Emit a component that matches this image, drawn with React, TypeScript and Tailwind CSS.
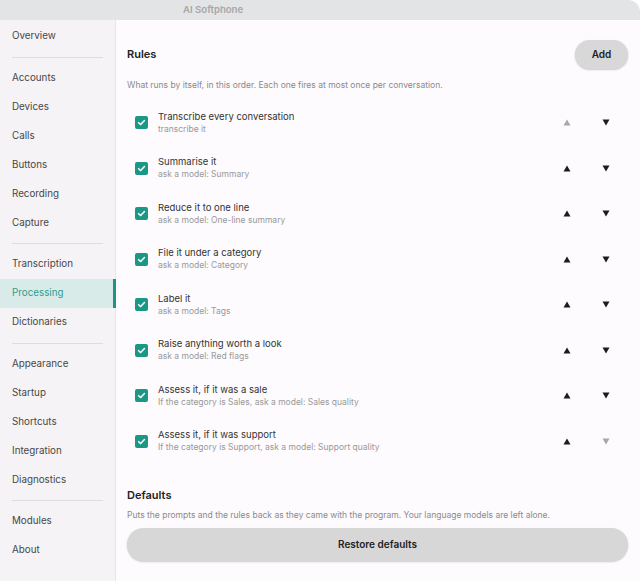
import React from 'react'

const navGroups: string[][] = [
  ['Overview'],
  ['Accounts', 'Devices', 'Calls', 'Buttons', 'Recording', 'Capture'],
  ['Transcription', 'Processing', 'Dictionaries'],
  ['Appearance', 'Startup', 'Shortcuts', 'Integration', 'Diagnostics'],
  ['Modules', 'About'],
]

const rules = [
  { title: 'Transcribe every conversation', sub: 'transcribe it' },
  { title: 'Summarise it', sub: 'ask a model: Summary' },
  { title: 'Reduce it to one line', sub: 'ask a model: One-line summary' },
  { title: 'File it under a category', sub: 'ask a model: Category' },
  { title: 'Label it', sub: 'ask a model: Tags' },
  { title: 'Raise anything worth a look', sub: 'ask a model: Red flags' },
  { title: 'Assess it, if it was a sale', sub: 'If the category is Sales, ask a model: Sales quality' },
  { title: 'Assess it, if it was support', sub: 'If the category is Support, ask a model: Support quality' },
]

const Arrow = ({ up, disabled }: { up?: boolean; disabled?: boolean }) => (
  <button className="w-[24px] h-[24px] flex items-center justify-center">
    <svg width="8" height="7" viewBox="0 0 8 7">
      <path
        d={up ? 'M4 0.5 L7.5 6.5 L0.5 6.5 Z' : 'M0.5 0.5 L7.5 0.5 L4 6.5 Z'}
        fill={disabled ? '#a8a8a8' : '#1c1c1c'}
      />
    </svg>
  </button>
)

const Check = () => (
  <div className="w-[13px] h-[13px] rounded-[2px] bg-[#1b9885] flex items-center justify-center shrink-0">
    <svg width="9" height="9" viewBox="0 0 10 10">
      <path d="M1.8 5.2 L4 7.3 L8.3 2.8" stroke="white" strokeWidth="1.7" fill="none" strokeLinecap="round" strokeLinejoin="round" />
    </svg>
  </div>
)

export default function App() {
  return (
    <div className="w-[640px] h-[581px] bg-white flex flex-col overflow-hidden" style={{ fontFamily: 'Inter, "Noto Sans", sans-serif' }}>
      {/* title bar */}
      <div className="h-[20px] bg-[#e3e4e5] rounded-tr-[12px] flex items-center pl-[183px] shrink-0">
        <span className="text-[9.6px] font-semibold text-[#a6a7a8]">AI Softphone</span>
      </div>

      <div className="flex flex-1 min-h-0">
        {/* sidebar */}
        <nav className="w-[116px] shrink-0 bg-[#f5f3f5] border-r border-[#e7e5e7] pt-[2px]">
          {navGroups.map((group, gi) => (
            <div key={gi}>
              {gi > 0 && (
                <div className="h-[12.5px] flex items-center px-[12px]">
                  <div className="w-full h-px bg-[#dedcde]" />
                </div>
              )}
              {group.map((item) => {
                const active = item === 'Processing'
                return (
                  <div
                    key={item}
                    className={
                      active
                        ? 'h-[29px] flex items-center pl-[12px] text-[9.8px] text-[#2f9d8e] bg-[#d9ebe9] border-r-[3px] border-[#1f9484] -mr-px'
                        : 'h-[29px] flex items-center pl-[12px] text-[9.8px] text-[#474747]'
                    }
                  >
                    {item}
                  </div>
                )
              })}
            </div>
          ))}
        </nav>

        {/* main */}
        <main className="flex-1 bg-[#fdfbfd] pl-[11px] pr-[12px] pt-[20px]">
          <div className="flex items-center justify-between h-[29px]">
            <h2 className="text-[11px] font-semibold text-[#222]">Rules</h2>
            <button className="w-[53px] h-[29px] rounded-full bg-[#d8d8d8] shadow-[0_1px_2px_rgba(0,0,0,0.2)] text-[10px] font-semibold text-[#222]">
              Add
            </button>
          </div>
          <p className="mt-[10px] text-[8.5px] text-[#8a8a8a] leading-[12px]">
            What runs by itself, in this order. Each one fires at most once per conversation.
          </p>

          <div className="mt-[9px]">
            {rules.map((r, i) => (
              <div key={r.title} className="h-[45.5px] flex items-center pl-[8px]">
                <Check />
                <div className="ml-[10px] flex-1 -mt-[1px]">
                  <div className="text-[9.5px] text-[#333] leading-[13px]">{r.title}</div>
                  <div className="text-[8.5px] text-[#999] leading-[12px]">{r.sub}</div>
                </div>
                <div className="flex items-center gap-[15px] mr-[10px]">
                  <Arrow up disabled={i === 0} />
                  <Arrow disabled={i === rules.length - 1} />
                </div>
              </div>
            ))}
          </div>

          <h2 className="mt-[24px] text-[11px] font-semibold text-[#222] leading-[14px]">Defaults</h2>
          <p className="mt-[7px] text-[8.5px] text-[#8a8a8a] leading-[12px]">
            Puts the prompts and the rules back as they came with the program. Your language models are left alone.
          </p>
          <button className="mt-[7px] w-full h-[33px] rounded-full bg-[#d7d7d7] shadow-[0_1px_2px_rgba(0,0,0,0.2)] text-[10px] font-semibold text-[#222]">
            Restore defaults
          </button>
        </main>
      </div>
    </div>
  )
}
